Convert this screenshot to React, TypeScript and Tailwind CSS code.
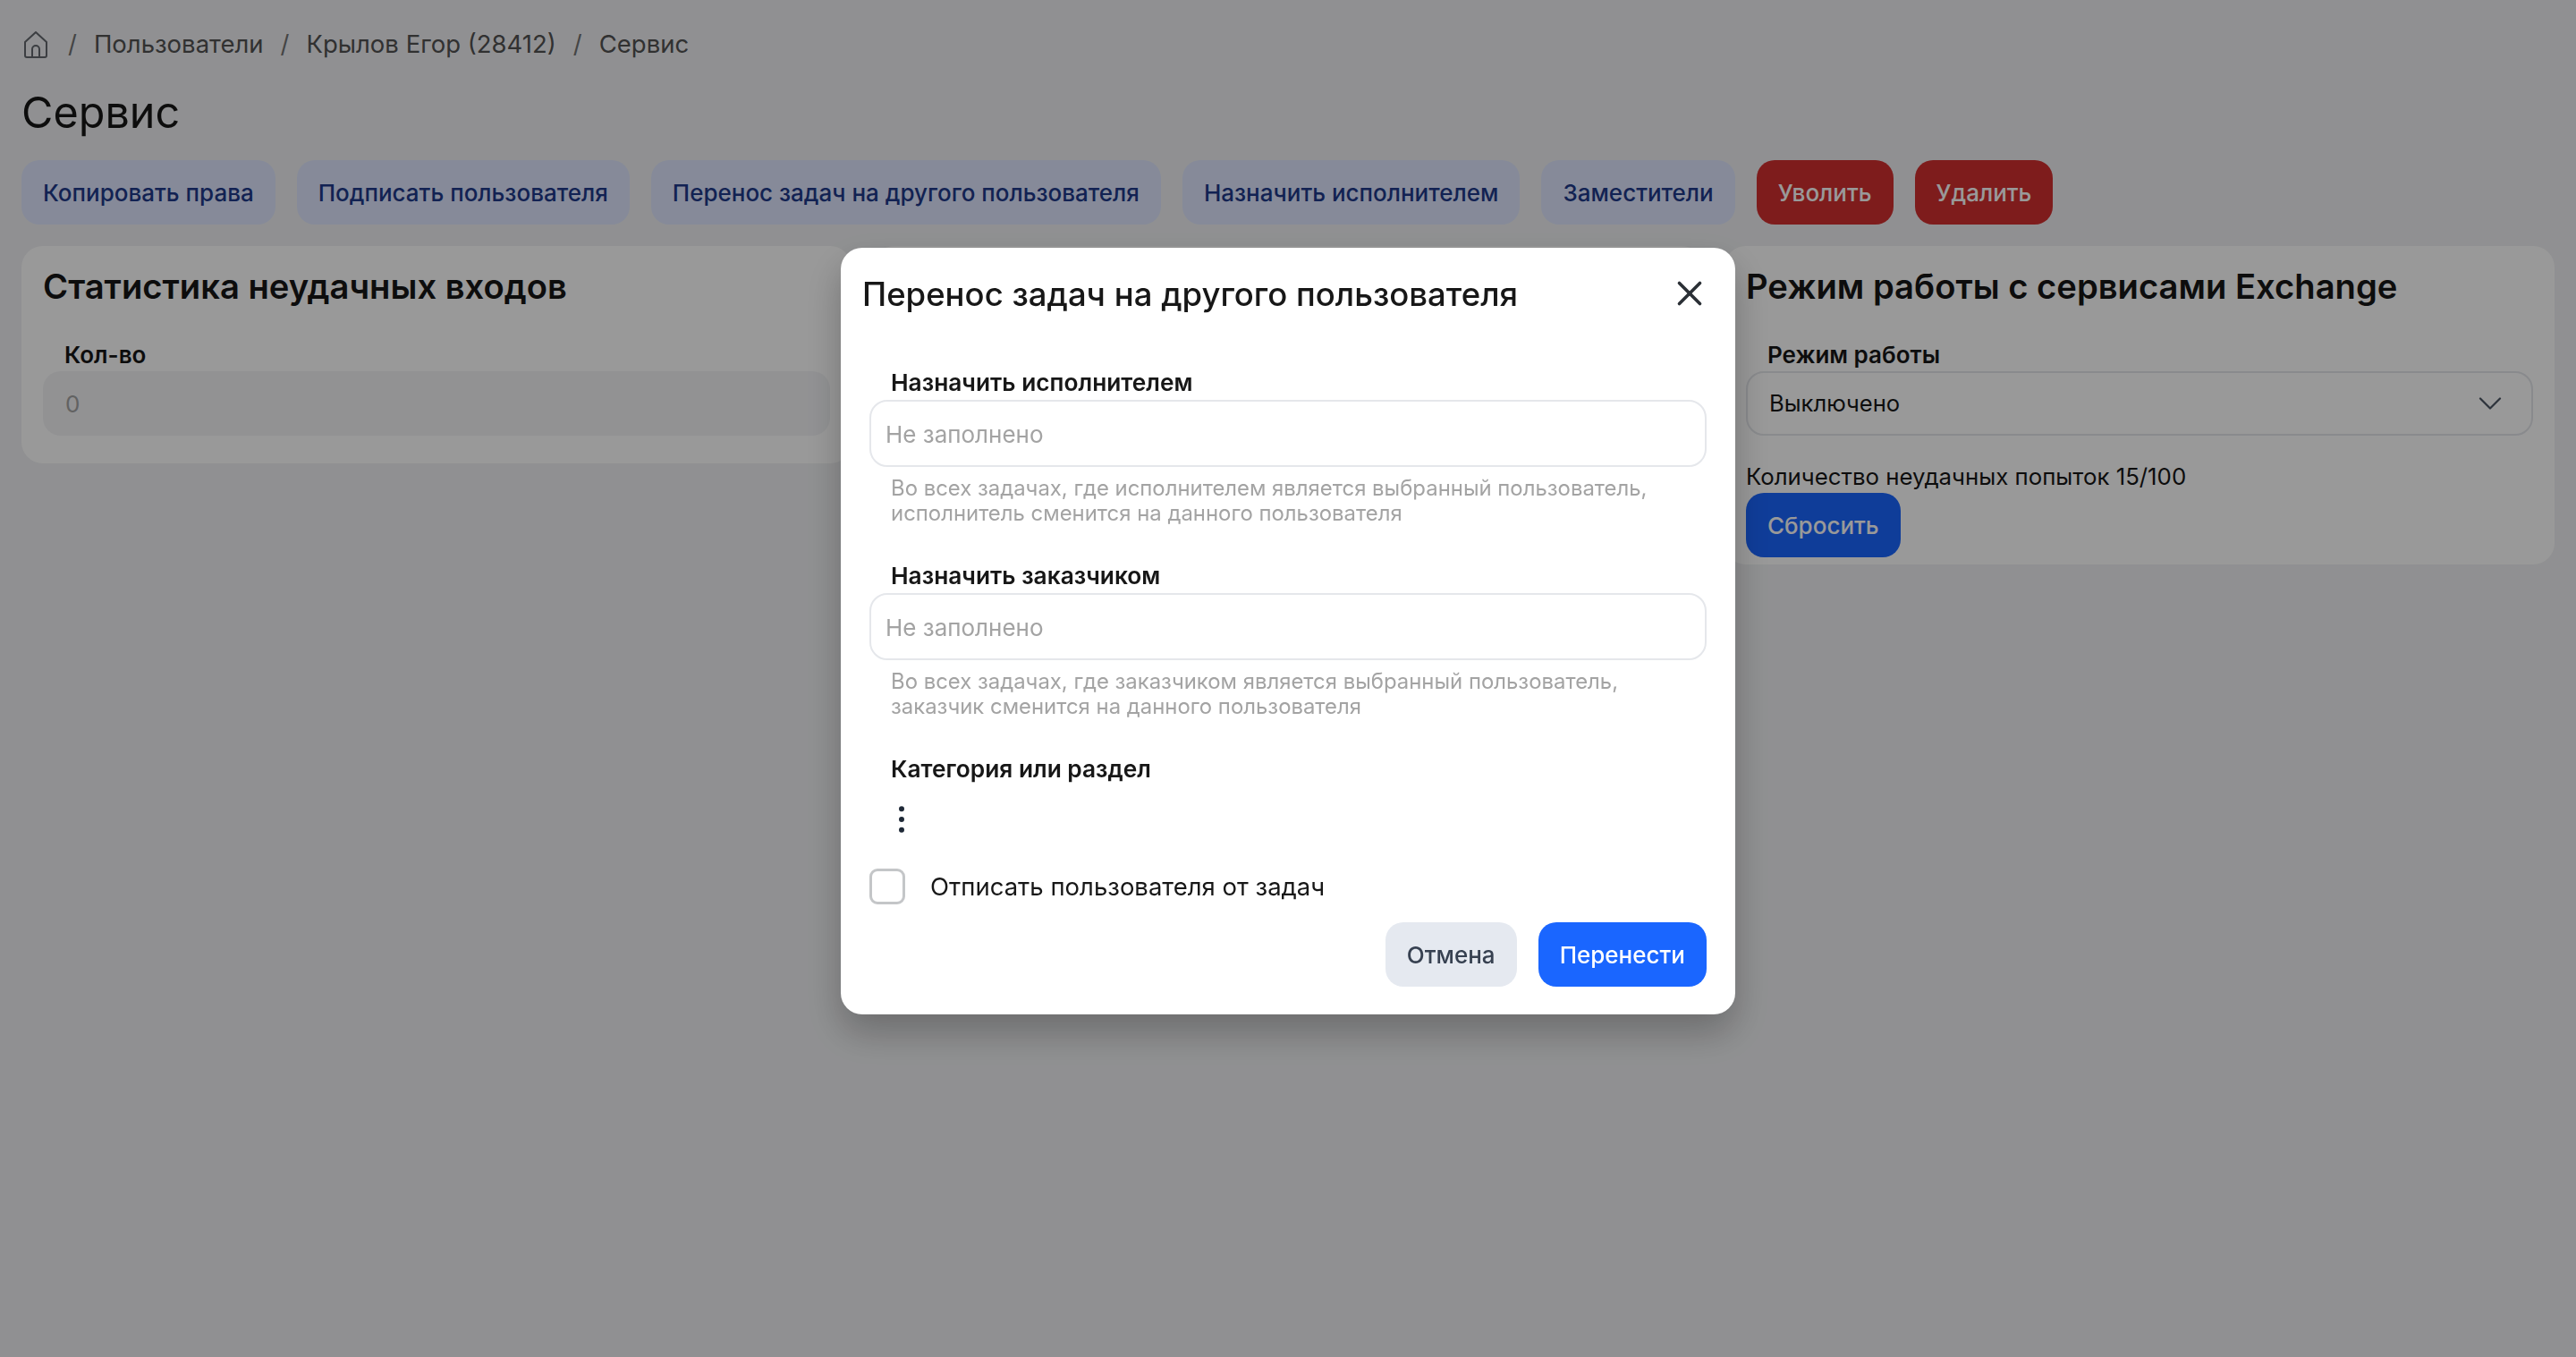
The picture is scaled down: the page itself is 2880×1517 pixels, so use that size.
import { ChevronDown, EllipsisVertical, X } from 'lucide-react';

const TOP_ACTIONS = ['Копировать права', 'Подписать пользователя', 'Перенос задач на другого пользователя', 'Назначить исполнителем', 'Заместители'];
const CRUMBS = ['Пользователи', 'Крылов Егор (28412)', 'Сервис'];

function HomeIcon() {
  return (
    <svg width="26" height="30" viewBox="0 0 26 30" fill="none" stroke="currentColor" strokeWidth="2" strokeLinejoin="round" className="mr-[4px] ml-[3px] text-[#64686e]">
      <path d="M1 12 13 1l12 11v15a2 2 0 0 1-2 2H3a2 2 0 0 1-2-2z" />
      <path d="M9 29v-9a4 4 0 0 1 8 0v9" />
    </svg>
  );
}

function Label({ children }: { children: string }) {
  return <label className="block pl-[24px] text-[26.3px] leading-[36px] font-semibold text-[#171717]">{children}</label>;
}

function UserField({ label, hint }: { label: string; hint: string[] }) {
  return (
    <div>
      <Label>{label}</Label>
      <input
        placeholder="Не заполнено"
        className="mt-[1px] block h-[75px] w-full rounded-[20px] border-2 border-[#e5e7eb] px-[16px] pt-[2px] text-[26px] placeholder:text-[#a3a3a3] outline-none"
      />
      <p className="mt-[10px] pl-[24px] text-[23.9px] leading-[28px] text-[#a3a3a3]">
        {hint[0]}
        <br />
        {hint[1]}
      </p>
    </div>
  );
}

export default function App() {
  return (
    <div className="relative min-h-screen overflow-hidden bg-[#f0f1f3] px-[24px] pt-[32px] font-['Inter',sans-serif] text-[#171717]">
      <nav className="flex h-[36px] items-center text-[27.5px] text-[#525252]">
        <HomeIcon />
        {CRUMBS.map((c) => (
          <span key={c} className="flex items-center">
            <span className="mx-[19px] text-[#737373]">/</span>
            <span>{c}</span>
          </span>
        ))}
      </nav>

      <h1 className="mt-[26px] text-[48.5px] leading-[64px] font-normal">Сервис</h1>

      <div className="mt-[21px] flex gap-[24px]">
        {TOP_ACTIONS.map((a) => (
          <button key={a} className="h-[72px] rounded-[20px] bg-[#dfe7ff] px-[24px] text-[26px] font-medium text-[#1e3a8a]">
            {a}
          </button>
        ))}
        {['Уволить', 'Удалить'].map((a) => (
          <button key={a} className="h-[72px] rounded-[20px] bg-[#d33030] px-[24px] text-[26px] font-medium text-white">
            {a}
          </button>
        ))}
      </div>

      <div className="mt-[24px] grid grid-cols-3 items-start gap-[24px]">
        <section className="rounded-[24px] bg-white px-[24px] pt-[21px] pb-[31px]">
          <h2 className="text-[38.2px] leading-[48px] font-semibold">Статистика неудачных входов</h2>
          <div className="mt-[35px] pl-[24px] text-[26px] leading-[36px] font-semibold">Кол-во</div>
          <div className="flex h-[72px] items-center rounded-[20px] bg-[#f3f4f6] px-[25px] text-[26px] text-[#a3a3a3]">0</div>
        </section>

        <section className="h-[240px] rounded-[24px] bg-white" />

        <section className="rounded-[24px] bg-white px-[24px] pt-[21px] pb-[8px]">
          <h2 className="text-[38.2px] leading-[48px] font-semibold">Режим работы с сервисами Exchange</h2>
          <div className="mt-[35px] pl-[24px] text-[26px] leading-[36px] font-semibold">Режим работы</div>
          <div className="flex h-[72px] items-center justify-between rounded-[20px] border-2 border-[#e5e7eb] pr-[24px] pl-[24px] text-[25.6px]">
            <span className="pt-[1px]">Выключено</span>
            <ChevronDown size={44} strokeWidth={1.2} className="text-[#4b5563]" />
          </div>
          <p className="mt-[28px] text-[25.8px] leading-[36px]">Количество неудачных попыток 15/100</p>
          <button className="h-[72px] rounded-[20px] bg-[#1a66ff] px-[24px] text-[26px] font-medium text-white">Сбросить</button>
        </section>
      </div>

      {/* modal */}
      <div className="fixed inset-0 flex justify-center bg-black/40 pt-[277px]">
        <div className="h-[857px] w-[1000px] rounded-[24px] bg-white px-[32px] pt-[23px] shadow-[0_20px_40px_rgba(0,0,0,0.25)]">
          <div className="flex h-[58px] items-center justify-between">
            <h3 className="-ml-[8px] text-[36.5px] font-medium">Перенос задач на другого пользователя</h3>
            <X size={46} strokeWidth={1.9} className="mr-[-4px] mb-[2px] text-[#2b3036]" />
          </div>
          <div className="mt-[52px] flex flex-col gap-[38px]">
            <UserField
              label="Назначить исполнителем"
              hint={['Во всех задачах, где исполнителем является выбранный пользователь,', 'исполнитель сменится на данного пользователя']}
            />
            <UserField
              label="Назначить заказчиком"
              hint={['Во всех задачах, где заказчиком является выбранный пользователь,', 'заказчик сменится на данного пользователя']}
            />
          </div>
          <div className="mt-[38px]">
            <Label>Категория или раздел</Label>
            <EllipsisVertical size={40} strokeWidth={1.6} fill="currentColor" className="mt-[18px] ml-[16px] text-[#1f2937]" />
          </div>
          <label className="mt-[34px] flex items-center">
            <span className="h-[40px] w-[40px] rounded-[9px] border-[3px] border-[#c4c6c8]" />
            <span className="ml-[28px] pt-[1px] text-[27.5px]">Отписать пользователя от задач</span>
          </label>
          <div className="mt-[19px] flex justify-end gap-[24px]">
            <button className="h-[72px] rounded-[20px] bg-[#e5e9f0] px-[24px] text-[26px] font-medium text-[#374151]">Отмена</button>
            <button className="h-[72px] rounded-[20px] bg-[#1a66ff] px-[24px] text-[26px] font-medium text-white">Перенести</button>
          </div>
        </div>
      </div>
    </div>
  );
}
